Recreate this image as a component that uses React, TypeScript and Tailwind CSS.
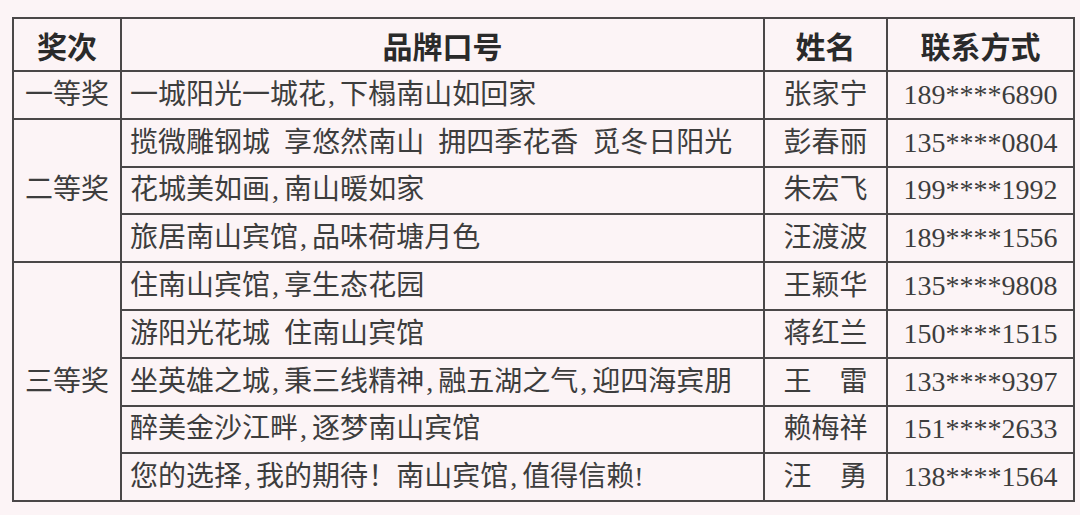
import React from 'react';

const rows = [
  { prize: '一等奖', span: 1, slogan: '一城阳光一城花,下榻南山如回家', name: '张家宁', phone: '189****6890' },
  { prize: '二等奖', span: 3, slogan: '揽微雕钢城 享悠然南山 拥四季花香 觅冬日阳光', name: '彭春丽', phone: '135****0804' },
  { slogan: '花城美如画,南山暖如家', name: '朱宏飞', phone: '199****1992' },
  { slogan: '旅居南山宾馆,品味荷塘月色', name: '汪渡波', phone: '189****1556' },
  { prize: '三等奖', span: 5, slogan: '住南山宾馆,享生态花园', name: '王颖华', phone: '135****9808' },
  { slogan: '游阳光花城 住南山宾馆', name: '蒋红兰', phone: '150****1515' },
  { slogan: '坐英雄之城,秉三线精神,融五湖之气,迎四海宾朋', name: '王\u3000雷', phone: '133****9397' },
  { slogan: '醉美金沙江畔,逐梦南山宾馆', name: '赖梅祥', phone: '151****2633' },
  { slogan: '您的选择,我的期待！南山宾馆,值得信赖!', name: '汪\u3000勇', phone: '138****1564' },
];

// commas and spaces in the slogans are set narrower/wider like the print
const Slogan = ({ text }: { text: string }) => (
  <>
    {text.split('').map((ch, i) => {
      if (ch === ',') return <span key={i} className="inline-block w-[14px] pl-[2px]">,</span>;
      if (ch === ' ') return <span key={i} className="inline-block w-[14px]" />;
      return <span key={i}>{ch}</span>;
    })}
  </>
);

const cell = 'border-2 border-[#4a4748]';
const body = "font-['Liberation_Serif','Noto_Sans_CJK_SC',serif] text-[28px] leading-none text-[#3d3d3d]";
const head = "font-['Noto_Sans_CJK_SC',sans-serif] font-bold text-[30px] leading-none text-[#2a2a2a]";

export default function App() {
  return (
    <div className="w-[1080px] h-[515px] bg-[#fcf4f6] pt-[17px] pl-[12px]">
      <table className="table-fixed border-collapse w-[1061px]">
        <colgroup>
          <col className="w-[108px]" />
          <col className="w-[643px]" />
          <col className="w-[123px]" />
          <col className="w-[187px]" />
        </colgroup>
        <thead>
          <tr className="h-[53px]">
            {['奖次', '品牌口号', '姓名', '联系方式'].map(h => (
              <th key={h} className={`${cell} ${head} text-center align-middle`}>{h}</th>
            ))}
          </tr>
        </thead>
        <tbody>
          {rows.map((r, i) => (
            <tr key={i} className="h-[47.8px]">
              {r.prize && (
                <td rowSpan={r.span} className={`${cell} ${body} text-center align-middle`}>{r.prize}</td>
              )}
              <td className={`${cell} ${body} pl-[8px] align-middle whitespace-nowrap`}>
                <Slogan text={r.slogan} />
              </td>
              <td className={`${cell} ${body} text-center align-middle`}>{r.name}</td>
              <td className={`${cell} ${body} text-center align-middle`}>{r.phone}</td>
            </tr>
          ))}
        </tbody>
      </table>
    </div>
  );
}
